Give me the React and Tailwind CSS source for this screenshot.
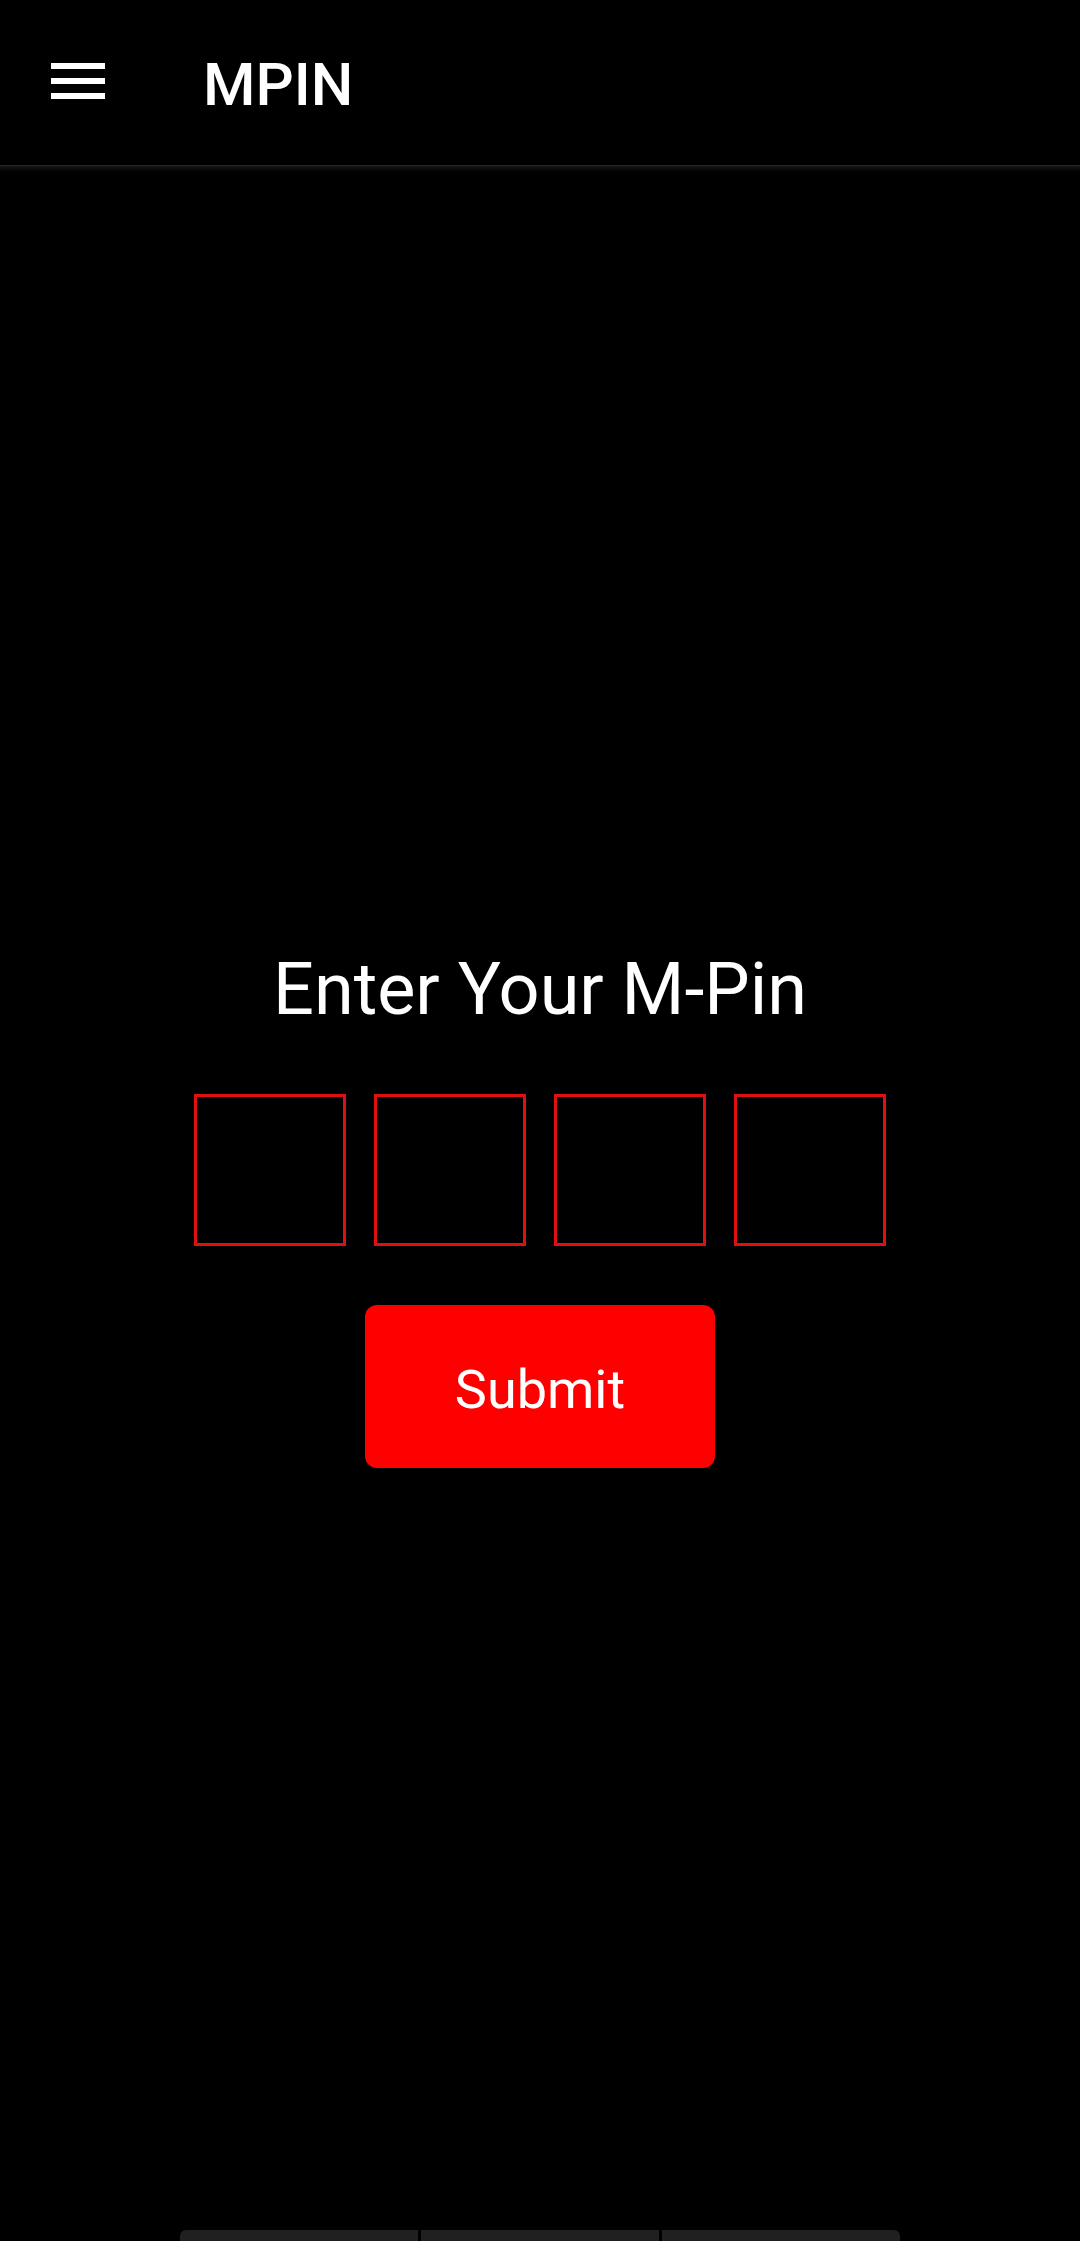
import React, { useState } from "react";

const MpinScreen = () => {
  const [pin, setPin] = useState(["", "", "", ""]);

  const handleChange = (i, value) => {
    const next = [...pin];
    next[i] = value.slice(-1);
    setPin(next);
  };

  return (
    <div
      className="w-[1080px] h-[2241px] bg-black flex flex-col text-white"
      style={{ fontFamily: "Roboto, 'Noto Sans', sans-serif" }}
    >
      {/* Toolbar */}
      <div className="h-[165px] flex items-center pl-[51px]">
        <div className="flex flex-col gap-[9px] w-[54px] mb-[3px]">
          <div className="h-[6px] bg-white" />
          <div className="h-[6px] bg-white" />
          <div className="h-[6px] bg-white" />
        </div>
        <h1 className="ml-[98px] mt-[4px] text-[60px] leading-none font-medium">MPIN</h1>
      </div>
      <div className="h-[1px] bg-[#262626]" />
      <div className="h-[11px] bg-gradient-to-b from-[#161616] to-black" />

      {/* Content */}
      <div className="flex flex-col items-center">
        <h2 className="mt-[777px] text-[72px] leading-none font-normal">Enter Your M-Pin</h2>

        <div className="mt-[68px] flex gap-[28px]">
          {pin.map((digit, i) => (
            <input
              key={i}
              type="password"
              inputMode="numeric"
              value={digit}
              onChange={(e) => handleChange(i, e.target.value)}
              className="w-[152px] h-[152px] bg-black border-[3px] border-[#e01010] text-center text-[60px] text-white outline-none"
            />
          ))}
        </div>

        <button
          type="button"
          className="mt-[59px] w-[350px] h-[163px] bg-[#ff0000] rounded-[12px] text-[54px] leading-none text-white pt-[6px]"
        >
          Submit
        </button>
      </div>

      <div className="flex-1" />

      {/* Bottom bars */}
      <div className="w-[721px] mx-auto flex gap-[3px] h-[11px]">
        <div className="flex-1 bg-[#202020] rounded-tl-[6px]" />
        <div className="flex-1 bg-[#202020]" />
        <div className="flex-1 bg-[#202020] rounded-tr-[6px]" />
      </div>
    </div>
  );
};

export default function App() {
  return <MpinScreen />;
}
